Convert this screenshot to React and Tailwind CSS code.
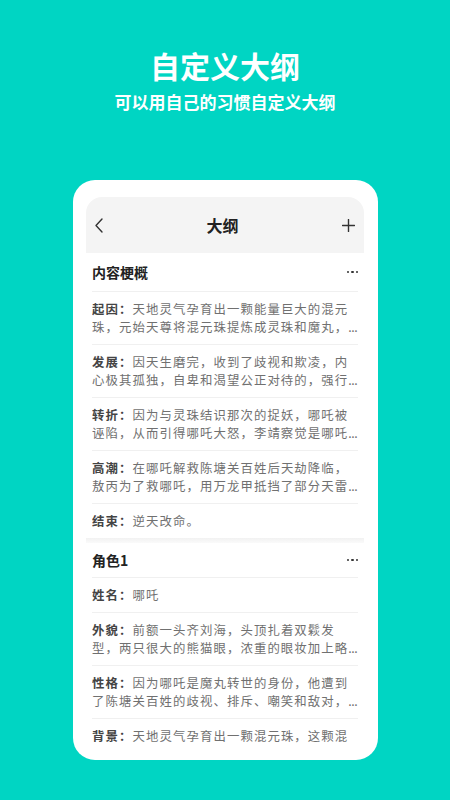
import React from 'react';

const outline = [
  { label: '起因', lines: ['天地灵气孕育出一颗能量巨大的混元', '珠，元始天尊将混元珠提炼成灵珠和魔丸，'] },
  { label: '发展', lines: ['因天生磨完，收到了歧视和欺凌，内', '心极其孤独，自卑和渴望公正对待的，强行'] },
  { label: '转折', lines: ['因为与灵珠结识那次的捉妖，哪吒被', '诬陷，从而引得哪吒大怒，李靖察觉是哪吒'] },
  { label: '高潮', lines: ['在哪吒解救陈塘关百姓后天劫降临，', '敖丙为了救哪吒，用万龙甲抵挡了部分天雷'] },
  { label: '结束', lines: ['逆天改命。'] },
];

const role = [
  { label: '姓名', lines: ['哪吒'] },
  { label: '外貌', lines: ['前额一头齐刘海，头顶扎着双鬏发', '型，两只很大的熊猫眼，浓重的眼妆加上略'] },
  { label: '性格', lines: ['因为哪吒是魔丸转世的身份，他遭到', '了陈塘关百姓的歧视、排斥、嘲笑和敌对，'] },
  { label: '背景', lines: ['天地灵气孕育出一颗混元珠，这颗混'] },
];

function Dots() {
  return (
    <div className="flex items-center gap-[2px]">
      <span className="w-[2.5px] h-[2.5px] rounded-full bg-[#333]" />
      <span className="w-[2.5px] h-[2.5px] rounded-full bg-[#333]" />
      <span className="w-[2.5px] h-[2.5px] rounded-full bg-[#333]" />
    </div>
  );
}

function Item({ item, last }) {
  return (
    <div className={`py-2 text-[12.4px] leading-[18px] tracking-[1.1px] ${last ? '' : 'border-b border-[#f0f0f0]'}`}>
      {item.lines.map((line, i) => (
        <div key={i} className="whitespace-nowrap overflow-hidden text-[#707070]">
          {i === 0 && <span className="font-semibold text-[#444]">{item.label}：</span>}
          {line}
          {i === 1 && <span className="tracking-[-0.5px]">...</span>}
        </div>
      ))}
    </div>
  );
}

export default function App() {
  return (
    <div
      className="w-full h-[800px] bg-[#00d5c3] flex flex-col items-center overflow-hidden"
      style={{ fontFamily: '"Noto Sans CJK SC", "Noto Sans", sans-serif' }}
    >
      <h1 className="pt-[47px] text-[30px] leading-[36px] font-bold text-white">自定义大纲</h1>
      <p className="mt-[7px] text-[17px] leading-[24px] font-bold text-white">可以用自己的习惯自定义大纲</p>

      <div className="mt-[66px] w-[305px] h-[580px] shrink-0 rounded-[22px] bg-white px-[13.5px] pt-[17px] overflow-hidden">
        <div className="h-[56px] bg-[#f4f4f4] rounded-t-[16px] flex items-center justify-between px-[9px]">
          <svg width="8" height="15" viewBox="0 0 8 15" fill="none">
            <polyline points="7,1 1,7.5 7,14" stroke="#333" strokeWidth="1.4" strokeLinecap="round" strokeLinejoin="round" />
          </svg>
          <span className="text-[16px] font-bold text-[#222]">大纲</span>
          <svg width="13" height="13" viewBox="0 0 13 13" fill="none">
            <path d="M6.5 0.5v12M0.5 6.5h12" stroke="#333" strokeWidth="1.4" strokeLinecap="round" />
          </svg>
        </div>

        <div className="px-[6px]">
          <div className="h-[39px] flex items-center justify-between border-b border-[#f0f0f0]">
            <span className="text-[14px] font-bold text-[#222]">内容梗概</span>
            <Dots />
          </div>
          {outline.map((item, i) => (
            <Item key={item.label} item={item} last={i === outline.length - 1} />
          ))}
        </div>

        <div className="h-[5px] bg-gradient-to-b from-[#f2f2f2] to-[#fafafa]" />

        <div className="px-[6px]">
          <div className="h-[35px] flex items-center justify-between border-b border-[#f0f0f0]">
            <span className="text-[14px] font-bold text-[#222]">角色1</span>
            <Dots />
          </div>
          {role.map((item, i) => (
            <Item key={item.label} item={item} last={i === role.length - 1} />
          ))}
        </div>
      </div>
    </div>
  );
}
